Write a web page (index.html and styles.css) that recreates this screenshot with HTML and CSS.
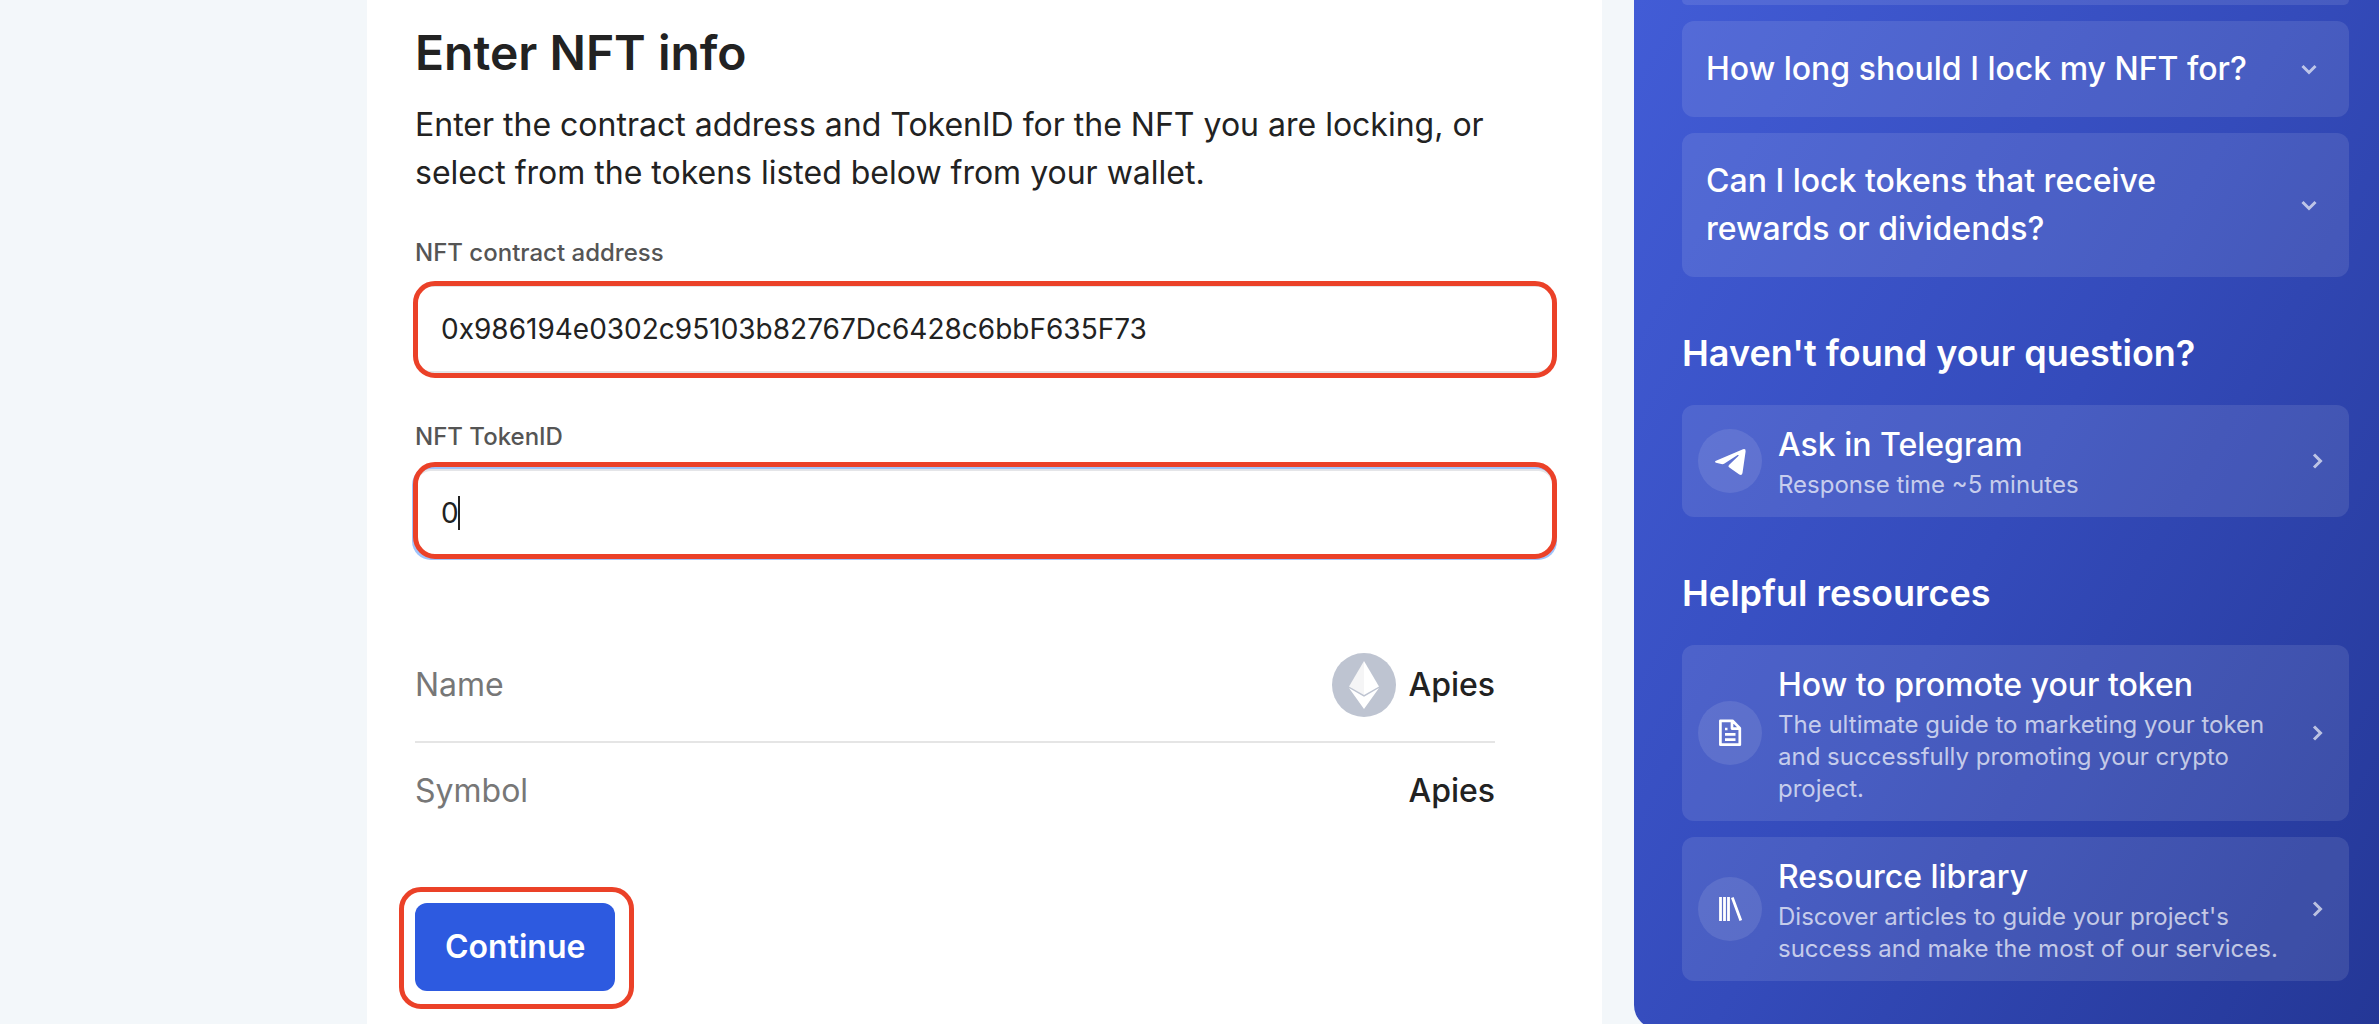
FILE: index.html
```html
<!DOCTYPE html>
<html lang="en">
<head>
<meta charset="utf-8">
<title>Enter NFT info</title>
<link rel="stylesheet" href="styles.css">
</head>
<body>
<div class="page">
  <main class="panel">
    <h1 class="title">Enter NFT info</h1>
    <p class="intro">Enter the contract address and TokenID for the NFT you are locking, or select from the tokens listed below from your wallet.</p>
    <form class="form">
      <div class="field">
        <label class="label" for="address">NFT contract address</label>
        <div class="control marked">
          <input class="input" id="address" type="text" value="0x986194e0302c95103b82767Dc6428c6bbF635F73">
        </div>
      </div>
      <div class="field">
        <label class="label" for="token">NFT TokenID</label>
        <div class="control marked marked-raised">
          <input class="input input-active" id="token" type="text" value="0">
          <span class="caret"></span>
        </div>
      </div>
      <dl class="details">
        <div class="detail">
          <dt>Name</dt>
          <dd>
            <svg class="coin" viewBox="0 0 64 64" aria-hidden="true">
              <circle cx="32" cy="32" r="32" fill="#bec4d1"/>
              <path d="M32 8 17 33.500 32 42z" fill="#f5f5f6"/>
              <path d="M32 8 47 33.500 32 42z" fill="#fff"/>
              <path d="M17 35 32 43.700 47 35 32 56z" fill="#fff"/>
            </svg>
            Apies
          </dd>
        </div>
        <div class="detail">
          <dt>Symbol</dt>
          <dd>Apies</dd>
        </div>
      </dl>
      <div class="actions marked marked-wide">
        <button class="button" type="button">Continue</button>
      </div>
    </form>
  </main>
  <aside class="help">
    <div class="stack">
      <div class="previous"></div>
      <button class="card question" type="button">
        <span>How long should I lock my NFT for?</span>
        <svg class="chevron" viewBox="0 0 32 32" aria-hidden="true"><path d="M9.500 13 16 19.500 22.500 13"/></svg>
      </button>
      <button class="card question" type="button">
        <span>Can I lock tokens that receive rewards or dividends?</span>
        <svg class="chevron" viewBox="0 0 32 32" aria-hidden="true"><path d="M9.500 13 16 19.500 22.500 13"/></svg>
      </button>
    </div>
    <h2 class="heading">Haven't found your question?</h2>
    <div class="stack">
      <a class="card link" href="#telegram">
        <span class="badge">
          <svg viewBox="0 0 64 64" aria-hidden="true"><path fill="#fff" d="M18 31.800 45 20.200q2.900-.9 2.600 2.200L44.500 44q-.6 3-3.200 1.600L31 38.300q-1.300-1 0-2.300L40.600 26.800q.3-1.200-1-.7L26.500 34.600q-1.500.9-3.200.5L18 33.800q-2-.9 0-2z"/></svg>
        </span>
        <span class="text">
          <strong class="name">Ask in Telegram</strong>
          <span class="note">Response time ~5 minutes</span>
        </span>
        <svg class="chevron" viewBox="0 0 32 32" aria-hidden="true"><path d="M13 9.500 19.500 16 13 22.500"/></svg>
      </a>
    </div>
    <h2 class="heading">Helpful resources</h2>
    <div class="stack">
      <a class="card link" href="#promote">
        <span class="badge">
          <svg viewBox="0 0 64 64" aria-hidden="true"><path fill="none" stroke="#fff" stroke-width="2.700" stroke-linejoin="round" d="M22.400 19.800H34.500L41.800 27.100V43.700H22.400zM34 20V27.600H41.800M27 28h2.500M27 33.300h10.500M27 38.600h10.500"/></svg>
        </span>
        <span class="text">
          <strong class="name">How to promote your token</strong>
          <span class="note">The ultimate guide to marketing your token and successfully promoting your crypto project.</span>
        </span>
        <svg class="chevron" viewBox="0 0 32 32" aria-hidden="true"><path d="M13 9.500 19.500 16 13 22.500"/></svg>
      </a>
      <a class="card link" href="#library">
        <span class="badge">
          <svg viewBox="0 0 64 64" aria-hidden="true"><path fill="none" stroke="#fff" stroke-width="2.800" d="M22.500 20v24M26.500 20v24M30.500 20v24M34.300 20.500 42.800 43.500"/></svg>
        </span>
        <span class="text">
          <strong class="name">Resource library</strong>
          <span class="note">Discover articles to guide your project's success and make the most of our services.</span>
        </span>
        <svg class="chevron" viewBox="0 0 32 32" aria-hidden="true"><path d="M13 9.500 19.500 16 13 22.500"/></svg>
      </a>
    </div>
  </aside>
</div>
</body>
</html>
```
FILE: styles.css
```css
* {
  box-sizing: border-box;
}

body {
  margin: 0;
  height: 100vh;
  overflow: hidden;
  background: #f3f7fa;
  color: #222;
  font-family: Inter, "Liberation Sans", sans-serif;
  font-size: 32px;
  line-height: 48px;
}

.page {
  display: grid;
  grid-template-columns: minmax(0, 1fr) 745px;
  align-items: start;
  gap: 32px;
  padding-left: 367px;
}

.panel {
  min-height: 100vh;
  padding: 25px 48px 24px;
  background: #fff;
}

.title {
  margin: 0 0 20px;
  font-size: 48px;
  font-weight: 600;
  line-height: 56px;
}

.intro {
  margin: 0 0 40px;
}

.form,
.field {
  display: flex;
  flex-direction: column;
  align-items: stretch;
}

.field {
  gap: 16px;
  margin-bottom: 48px;
}

.label {
  color: #555;
  font-size: 24px;
  font-weight: 500;
  line-height: 32px;
}

.control {
  display: flex;
}

.input {
  width: 100%;
  height: 88px;
  padding: 0 24px;
  border: 2px solid #e4e5e8;
  border-radius: 16px;
  outline: none;
  background: #fff;
  color: #222;
  font: inherit;
  font-size: 28px;
}

.input-active {
  box-shadow: 0 0 0 3px #a0c3fb;
}

.caret {
  position: absolute;
  top: 27px;
  left: 43px;
  width: 2px;
  height: 34px;
  background: #222;
}

/* Red frame that highlights a step of the walkthrough */
.marked {
  position: relative;
}

.marked::after {
  content: "";
  position: absolute;
  inset: -4px -3px -5px -2px;
  border: 5px solid #eb4128;
  border-radius: 22px;
  pointer-events: none;
}

.marked-raised::after {
  inset: -7px -3px -2px -2px;
}

.marked-wide::after {
  inset: -16px -19px -18px -16px;
}

.details {
  margin: 24px 59px 64px 0;
}

.detail {
  display: flex;
  align-items: center;
  justify-content: space-between;
  padding: 24px 0;
}

.detail + .detail {
  border-top: 2px solid #e5e5e5;
}

.detail dt {
  color: #777;
}

.detail dd {
  display: flex;
  align-items: center;
  gap: 12px;
  margin: 0;
  font-weight: 500;
}

.coin {
  width: 64px;
  height: 64px;
}

.actions {
  align-self: flex-start;
}

.button {
  display: block;
  padding: 20px 30px;
  border: 0;
  border-radius: 12px;
  background: #2d5ae0;
  color: #fff;
  font: inherit;
  font-weight: 600;
}

.help {
  padding: 0 30px 48px 48px;
  border-radius: 0 0 0 24px;
  background: linear-gradient(120deg, #425cd6 0%, #344bbb 50%, #243796 100%);
  color: #fff;
}

.stack {
  display: flex;
  flex-direction: column;
  gap: 16px;
}

.previous {
  height: 5px;
  border-radius: 0 0 12px 12px;
  background: rgba(255, 255, 255, 0.1);
}

.card {
  display: flex;
  align-items: center;
  gap: 16px;
  border: 0;
  border-radius: 12px;
  background: rgba(255, 255, 255, 0.1);
  color: #fff;
  font: inherit;
  text-align: left;
  text-decoration: none;
}

.question {
  justify-content: space-between;
  padding: 24px;
  font-weight: 500;
}

.link {
  padding: 16px;
}

.heading {
  margin: 48px 0 24px;
  font-size: 36px;
  font-weight: 600;
  line-height: 56px;
}

.badge {
  flex: none;
  width: 64px;
  height: 64px;
  border-radius: 50%;
  background: rgba(255, 255, 255, 0.1);
}

.badge svg {
  display: block;
}

.text {
  display: flex;
  flex: 1;
  flex-direction: column;
}

.name {
  font-weight: 500;
}

.note {
  color: rgba(255, 255, 255, 0.7);
  font-size: 24px;
  line-height: 32px;
}

.chevron {
  flex: none;
  width: 32px;
  height: 32px;
  fill: none;
  stroke: rgba(255, 255, 255, 0.65);
  stroke-width: 3;
}
```
